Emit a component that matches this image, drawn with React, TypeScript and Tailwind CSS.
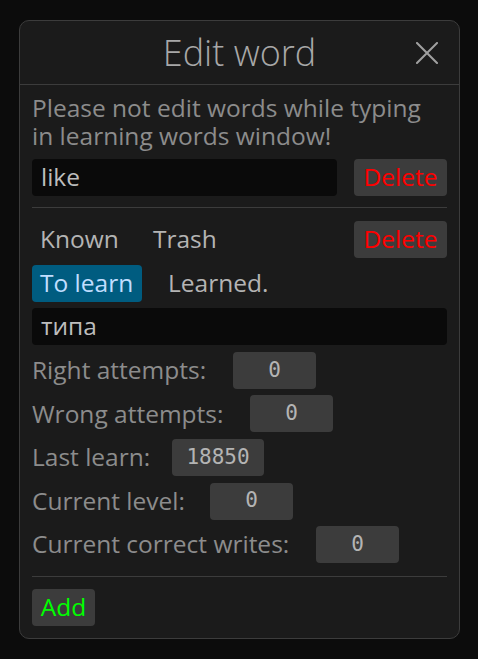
const sans = "font-['Open_Sans','Noto_Sans',sans-serif]";
const mono = "font-['DejaVu_Sans_Mono','Liberation_Mono',monospace]";

interface StatRow {
  label: string;
  value: string;
  labelWidth: string;
  boxWidth: string;
}

const stats: StatRow[] = [
  { label: "Right attempts:", value: "0", labelWidth: "w-[201px]", boxWidth: "w-[83px]" },
  { label: "Wrong attempts:", value: "0", labelWidth: "w-[218px]", boxWidth: "w-[83px]" },
  { label: "Last learn:", value: "18850", labelWidth: "w-[140px]", boxWidth: "w-[92px]" },
  { label: "Current level:", value: "0", labelWidth: "w-[178px]", boxWidth: "w-[83px]" },
  { label: "Current correct writes:", value: "0", labelWidth: "w-[284px]", boxWidth: "w-[83px]" },
];

function CloseIcon() {
  return (
    <svg width="22" height="22" viewBox="0 0 22 22" className="absolute right-[21px] top-1/2 -translate-y-1/2">
      <path d="M1 1 L21 21 M21 1 L1 21" stroke="#a0a0a0" strokeWidth="2" strokeLinecap="square" />
    </svg>
  );
}

function TextInput({ value, className = "" }: { value: string; className?: string }) {
  return (
    <div
      className={`flex h-[37px] items-center rounded-[4px] bg-[#0a0a0a] pl-[9px] text-[24.5px] text-[#bdbdbd] ${className}`}
    >
      {value}
    </div>
  );
}

function DeleteButton() {
  return (
    <button className="flex h-[37px] w-[93px] items-center justify-center rounded-[4px] bg-[#3c3c3c] text-[24.5px] text-[#ff0000]">
      Delete
    </button>
  );
}

export default function App() {
  return (
    <div className={`min-h-screen bg-[#0c0c0c] pl-[19px] pt-[20px] ${sans}`}>
      <div className="w-[441px] rounded-[10px] border border-[#3c3c3c] bg-[#1b1b1b]">
        {/* title bar */}
        <div className="relative flex h-[64px] items-center justify-center border-b border-[#3c3c3c]">
          <span className="text-[36px] leading-none font-light text-[#a8a8a8]">Edit word</span>
          <CloseIcon />
        </div>

        <div className="px-[12px] pb-[12px] pt-[9px]">
          <p className="text-[24.5px] leading-[28px] text-[#8c8c8c]">
            Please not edit words while typing
            <br />
            in learning words window!
          </p>

          <div className="mt-[9px] flex justify-between">
            <TextInput value="like" className="w-[305px]" />
            <DeleteButton />
          </div>

          <div className="mt-[11px] h-px bg-[#3c3c3c]" />

          <div className="mt-[13px] flex flex-col gap-[6.6px]">
            <div className="flex h-[37px] items-center text-[24.5px] text-[#b4b4b4]">
              <span className="w-[113px] pl-[8px]">Known</span>
              <span className="pl-[8px]">Trash</span>
              <div className="ml-auto">
                <DeleteButton />
              </div>
            </div>

            <div className="flex h-[37px] items-center text-[24.5px]">
              <span className="flex h-full w-[110px] items-center rounded-[4px] bg-[#005c80] pl-[8px] text-[#c0deff]">
                To learn
              </span>
              <span className="ml-[18px] pl-[8px] text-[#b4b4b4]">Learned.</span>
            </div>

            <TextInput value="типа" className="w-full" />

            {stats.map((s) => (
              <div key={s.label} className="flex h-[37px] items-center text-[24.5px] text-[#8c8c8c]">
                <span className={s.labelWidth}>{s.label}</span>
                <span
                  className={`flex h-full items-center justify-center rounded-[4px] bg-[#3c3c3c] text-[21px] text-[#b4b4b4] ${mono} ${s.boxWidth}`}
                >
                  {s.value}
                </span>
              </div>
            ))}
          </div>

          <div className="mt-[12.8px] h-px bg-[#3c3c3c]" />

          <button className="mt-[12px] flex h-[37px] w-[63px] items-center justify-center rounded-[4px] bg-[#3c3c3c] text-[24.5px] text-[#00ff00]">
            Add
          </button>
        </div>
      </div>
    </div>
  );
}
